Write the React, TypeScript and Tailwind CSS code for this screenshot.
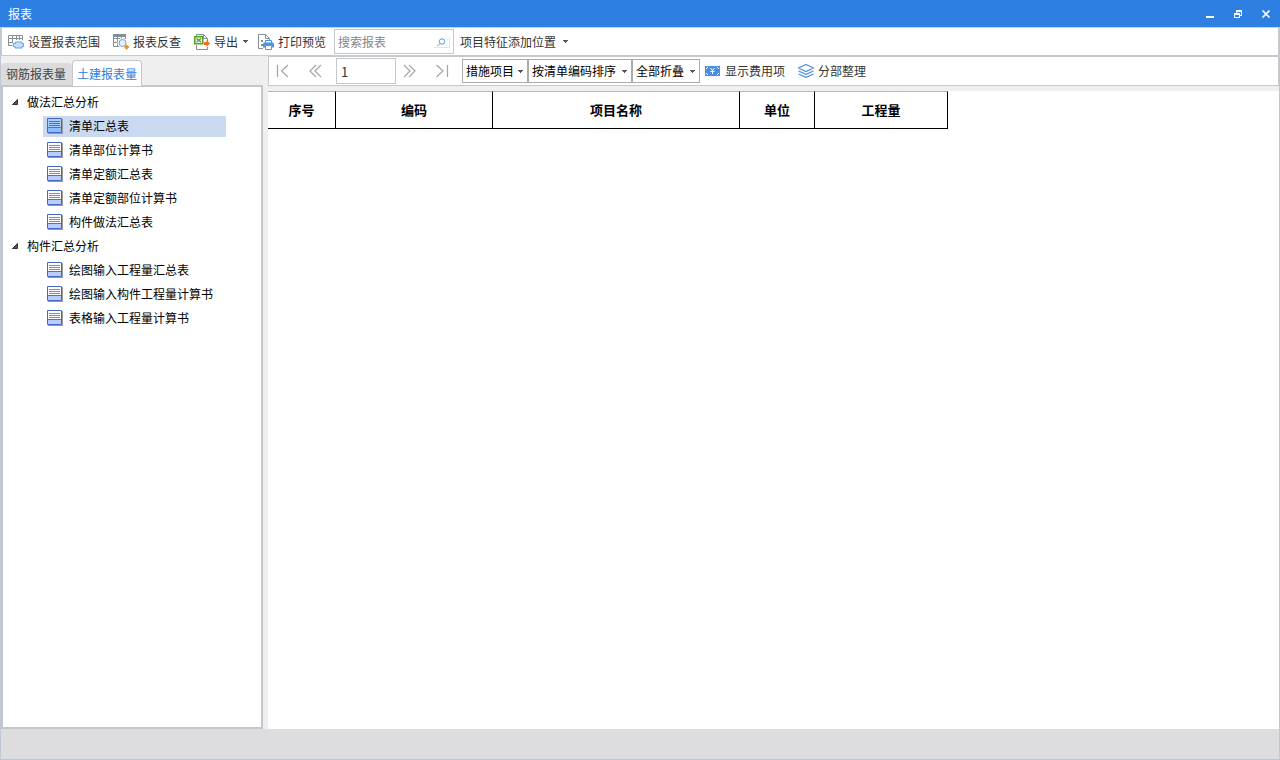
import type { ReactNode } from "react";
import clsx from "clsx";

const groups = [
  {
    title: "做法汇总分析",
    reports: ["清单汇总表", "清单部位计算书", "清单定额汇总表", "清单定额部位计算书", "构件做法汇总表"],
  },
  {
    title: "构件汇总分析",
    reports: ["绘图输入工程量汇总表", "绘图输入构件工程量计算书", "表格输入工程量计算书"],
  },
];

const columns = [
  { title: "序号", width: "w-[68px]" },
  { title: "编码", width: "w-[157px]" },
  { title: "项目名称", width: "w-[247px]" },
  { title: "单位", width: "w-[75px]" },
  { title: "工程量", width: "w-[133px]" },
];

function Caret() {
  return (
    <svg width="5" height="3" viewBox="0 0 5 3" className="pointer-events-none shrink-0" fill="#555">
      <path d="M0 0h5v1H4v1H3v1H2V2H1V1H0z" />
    </svg>
  );
}

function RangeIcon() {
  return (
    <svg width="16" height="16" viewBox="0 0 16 16" fill="none" className="shrink-0">
      <path d="M.5 1.500h14v10H.5zM.5 4.500h14M.5 8.500h14M4.500 1.500v10M8.500 1.500v10M11.500 1.500v10" stroke="#858f99" />
      <path d="M7.500 7.500h6l2 3-2 3h-6l-2-3z" fill="#fff" stroke="#fff" strokeWidth="3" />
      <path d="M7.500 8h6.500v1.500h1.500v3H14V14H7v-1.500H5.500v-3h2z" fill="#c6defa" stroke="#66a3e6" strokeLinejoin="round" />
    </svg>
  );
}

function LookupIcon() {
  return (
    <svg width="17" height="16" viewBox="0 0 17 16" fill="none" className="-mr-px shrink-0">
      <path d="M.5 1.500h12v11H.5zM.5 4.500h12M.5 8.500h12M4.500 3v10M8.500 3v10" stroke="#858f99" />
      <path d="M0 0h13v3H0z" fill="#858f99" />
      <circle cx="9.500" cy="9" r="4" fill="#fff" stroke="#fff" strokeWidth="2" />
      <circle cx="9.500" cy="9" r="3.500" fill="#e3effd" stroke="#7a9de0" />
      <path d="m13.500 10.500 3 2.500-3 3-2.500-3z" fill="#f5921e" />
    </svg>
  );
}

function ExportIcon() {
  return (
    <svg width="16" height="16" viewBox="0 0 16 16" fill="none" className="shrink-0">
      <path d="M2.500 2V.5h7l4 4v3M9.500.5v4h4M2.500 11v4.500h11V13" stroke="#858f99" />
      <path d="M.75 2.750h8v7h-8z" fill="#f2faec" stroke="#5aa02c" strokeWidth="1.500" />
      <path d="m2.500 4.500 4.500 3.500m0-3.500-4.500 3.500" stroke="#5aa02c" strokeWidth="1.500" />
      <path d="M10 8h2.500V6L16 9.500 12.500 13v-2H10z" fill="#f07020" />
    </svg>
  );
}

function PrintIcon() {
  return (
    <svg width="16" height="16" viewBox="0 0 16 16" fill="none" className="shrink-0">
      <path d="M.5.5h7l4 4V6M7.500.5v4h4M.5.5v14H5" stroke="#858f99" />
      <path d="M3 6h2v2H3zM3 10h2v2H3z" fill="#858f99" />
      <path d="M7.500 9V6.500h6V9" fill="#fff" stroke="#4d94e6" />
      <path d="M6 8.500h9l1 1v4h-2v-2H7.500v2H5v-4z" fill="#4d94e6" />
      <path d="M7.500 11.500h6v4h-6z" fill="#fff" stroke="#4d94e6" />
    </svg>
  );
}

function FeeIcon() {
  return (
    <svg width="16" height="10" viewBox="0 0 16 10" fill="none" className="shrink-0">
      <path d="M0 0h15v10H0z" fill="#4a90e2" />
      <path d="M1.500 3V1.500H3M12 1.500h1.500V3M1.500 7v1.500H3M12 8.500h1.500V7" stroke="#fff" strokeDasharray="1 1" />
      <path d="m5.500 2 2 2.500 2-2.500M5.500 5.500h4M7.500 4.500V8" stroke="#fff" />
    </svg>
  );
}

function LayersIcon() {
  return (
    <svg width="16" height="14" viewBox="0 0 16 14" fill="none" stroke="#4a90e2" strokeWidth="1.200" className="shrink-0">
      <path d="M8 .5 15.500 4 8 7.500.5 4zM.5 7 8 10.300 15.500 7M.5 10 8 13.300l7.500-3.300" />
    </svg>
  );
}

function ReportIcon({ active }: { active: boolean }) {
  return (
    <svg width="16" height="16" viewBox="0 0 16 16" className="shrink-0">
      <path d="M1 1h15v15H1z" fill="#9a9a9a" />
      <path d="M.5.5h14v14H.5z" fill={active ? "#a9ceff" : "#fff"} stroke="#4468c4" />
      <path d="M1 10h13v4H1z" fill={active ? "#8dbdff" : "#b8ccff"} />
      <path d="M2 3.500h11M2 5.500h11M2 7.500h11" stroke={active ? "#4472cc" : "#6f8bd0"} />
      <path d="M1 9.500h13" stroke="#4d72c8" />
    </svg>
  );
}

function ToolButton({ icon, menu, children }: { icon: ReactNode; menu?: boolean; children: ReactNode }) {
  return (
    <button type="button" className="flex h-5 shrink-0 items-center gap-1 whitespace-nowrap text-[#333]">
      {icon}
      <span className={clsx(menu && "pr-px")}>{children}</span>
      {menu && <Caret />}
    </button>
  );
}

function PageButton({ label, d }: { label: string; d: string }) {
  return (
    <button type="button" aria-label={label} className="flex h-6 w-7 shrink-0 items-center justify-center">
      <svg width="14" height="14" viewBox="0 0 14 14" fill="none" stroke="#a4a4a4" strokeWidth="1.200">
        <path d={d} />
      </svg>
    </button>
  );
}

function ToolSelect({ label, value, width }: { label: string; value: string; width: string }) {
  return (
    <div className={clsx("relative h-6 shrink-0", width)}>
      <select
        aria-label={label}
        defaultValue={value}
        className="h-full w-full appearance-none border border-[#ababab] bg-white pl-[3px] text-black outline-none"
      >
        <option>{value}</option>
      </select>
      <span className="pointer-events-none absolute inset-y-0 right-[5px] flex items-center">
        <Caret />
      </span>
    </div>
  );
}

function TitleBar() {
  return (
    <header className="flex h-7 shrink-0 items-center justify-between border-b border-[#b9d3f2] bg-[#2d80e2] pl-2 pr-[9px] text-white">
      <h1>报表</h1>
      <div className="flex items-center gap-[18px]">
        <button type="button" aria-label="最小化">
          <svg width="10" height="10" viewBox="0 0 10 10" fill="currentColor"><path d="M1 7h8v2H1z" /></svg>
        </button>
        <button type="button" aria-label="还原">
          <svg width="10" height="10" viewBox="0 0 10 10" fill="currentColor" fillRule="evenodd">
            <path d="M3 1h6v6H7V6h1V3H4v1H3zM1 4h6v5H1zM2 6v2h4V6z" />
          </svg>
        </button>
        <button type="button" aria-label="关闭">
          <svg width="10" height="10" viewBox="0 0 10 10" fill="none" stroke="currentColor" strokeWidth="1.700"><path d="m1.500 1.500 7 7m0-7-7 7" /></svg>
        </button>
      </div>
    </header>
  );
}

function Toolbar() {
  return (
    <div className="flex h-7 shrink-0 items-center border-x border-b border-[#c6cacf] bg-white pl-[6px]">
      <div className="flex items-center gap-[13px]">
        <ToolButton icon={<RangeIcon />}>设置报表范围</ToolButton>
        <ToolButton icon={<LookupIcon />}>报表反查</ToolButton>
        <ToolButton icon={<ExportIcon />} menu>导出</ToolButton>
      </div>
      <div className="ml-[10px] flex items-center gap-2">
        <ToolButton icon={<PrintIcon />}>打印预览</ToolButton>
        <div className="relative">
          <input
            type="search"
            aria-label="搜索报表"
            placeholder="搜索报表"
            className="block h-[25px] w-[120px] border border-[#c3c8cc] bg-white pl-[3px] pr-5 outline-none placeholder:text-[#868686]"
          />
          <button type="button" aria-label="搜索" className="absolute right-1 top-2 flex h-[11px] w-4 items-center justify-center border-b border-r border-[#e4e4e4]">
            <svg width="9" height="9" viewBox="0 0 9 9" fill="none" stroke="#4f9be0">
              <circle cx="5" cy="3.500" r="2.700" />
              <path d="M3 5.500.5 8" />
            </svg>
          </button>
        </div>
      </div>
      <button type="button" className="ml-[6px] flex items-center gap-[7px] whitespace-nowrap text-[#333]">
        项目特征添加位置
        <Caret />
      </button>
    </div>
  );
}

function Sidebar() {
  return (
    <aside className="flex w-[262px] shrink-0 flex-col pt-1">
      <div role="tablist" className="flex h-[25px] items-end">
        <button type="button" role="tab" aria-selected={false} className="h-[22px] w-[71px] rounded-t bg-[#dcdcdc] pr-px text-[#444]">
          钢筋报表量
        </button>
        <button type="button" role="tab" aria-selected className="relative z-10 -mb-px h-[26px] w-[70px] rounded-t-sm border border-b-0 border-[#c3c8cd] bg-white text-[#2d80e2]">
          土建报表量
        </button>
      </div>
      <nav aria-label="报表目录" className="flex-1 border-2 border-[#c3c8cd] bg-white pt-[3px]">
        <ul>
          {groups.map((group, g) => (
            <li key={group.title}>
              <button type="button" aria-expanded className="flex h-6 items-center gap-2 pl-2 text-black">
                <svg width="8" height="8" viewBox="0 0 8 8"><path d="M6.500 1.500v5h-5z" fill="#555" stroke="#333" /></svg>
                {group.title}
              </button>
              <ul>
                {group.reports.map((report, r) => {
                  const active = g === 0 && r === 0;
                  return (
                    <li key={report} className="flex h-6 items-center pl-10">
                      <button
                        type="button"
                        className={clsx("flex h-[21px] w-[183px] items-center gap-[6px] whitespace-nowrap pl-1 text-black", active && "bg-[#c9d9ef]")}
                      >
                        <ReportIcon active={active} />
                        {report}
                      </button>
                    </li>
                  );
                })}
              </ul>
            </li>
          ))}
        </ul>
      </nav>
    </aside>
  );
}

function ReportBar() {
  return (
    <div className="flex h-[30px] shrink-0 items-center border border-[#c6cacf] bg-white">
      <div className="flex gap-1">
        <PageButton label="第一页" d="M1.500 1v12M12 1 5.500 7l6.500 6" />
        <PageButton label="上一页" d="M8 1 2 7l6 6M13 1 7 7l6 6" />
      </div>
      <input aria-label="页码" defaultValue="1" className="ml-[7px] h-[26px] w-[60px] shrink-0 border border-[#c3c8cc] bg-white pl-1 text-[13px] text-[#333] outline-none" />
      <div className="flex gap-1">
        <PageButton label="下一页" d="m1 1 6 6-6 6M6 1l6 6-6 6" />
        <PageButton label="最后一页" d="m1.500 1 6.500 6-6.500 6M12.500 1v12" />
      </div>
      <div className="ml-[6px] flex">
        <ToolSelect label="项目类型" value="措施项目" width="w-[66px]" />
        <ToolSelect label="排序方式" value="按清单编码排序" width="w-[104px]" />
        <ToolSelect label="折叠方式" value="全部折叠" width="w-[68px]" />
      </div>
      <div className="ml-[5px] flex gap-[13px]">
        <ToolButton icon={<FeeIcon />}>显示费用项</ToolButton>
        <ToolButton icon={<LayersIcon />}>分部整理</ToolButton>
      </div>
    </div>
  );
}

function ReportTable() {
  return (
    <table className="table-fixed border-separate border-spacing-0 text-[13px] text-black">
      <thead>
        <tr>
          {columns.map((col) => (
            <th key={col.title} scope="col" className={clsx("h-[38px] border-b border-r border-t border-black border-t-[#b8b8b8] p-0 text-center font-bold", col.width)}>
              {col.title}
            </th>
          ))}
        </tr>
      </thead>
    </table>
  );
}

export default function App() {
  return (
    <div className="flex h-screen flex-col bg-[#efefef] font-['Noto_Sans_CJK_SC',sans-serif] text-xs">
      <TitleBar />
      <div className="flex min-h-0 flex-1 flex-col border-x border-b border-[#c0c7d3]">
        <Toolbar />
        <div className="flex min-h-0 flex-1">
          <Sidebar />
          <main className="ml-[5px] flex min-w-0 flex-1 flex-col">
            <ReportBar />
            <div className="mt-[5px] flex-1 bg-white">
              <ReportTable />
            </div>
          </main>
        </div>
        <footer className="h-[30px] shrink-0 bg-[#dddddf]" />
      </div>
    </div>
  );
}
